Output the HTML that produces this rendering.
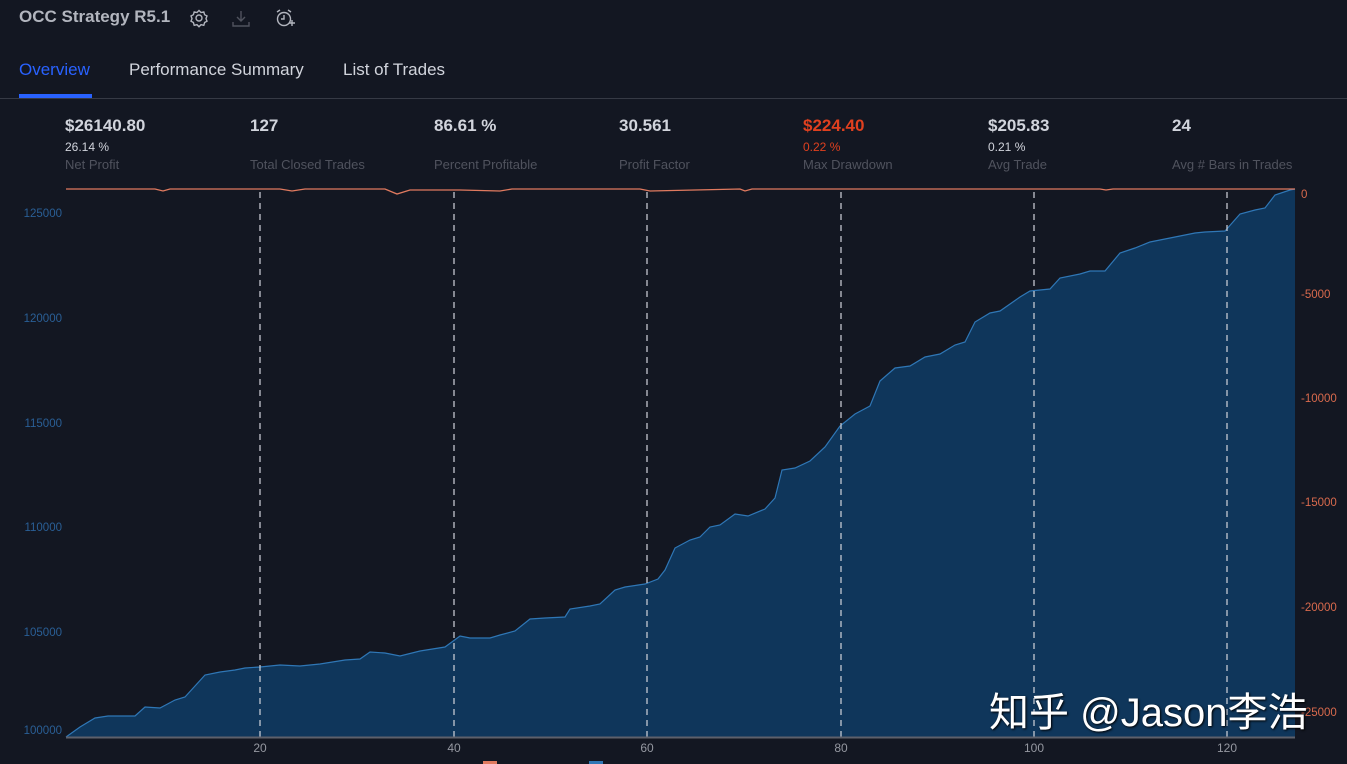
<!DOCTYPE html>
<html><head><meta charset="utf-8"><style>
body{margin:0;width:1347px;height:764px;background:#131722;overflow:hidden;font-family:"Liberation Sans","Noto Sans CJK SC",sans-serif;position:relative;color:#d1d4dc}
.t{position:absolute;white-space:nowrap}
.v{font-size:17px;font-weight:bold;color:#d1d4dc}
.s{font-size:12px;color:#d1d4dc}
.l{font-size:13px;color:#50535e}
</style></head><body>
<div class="t" style="left:19px;top:7px;font-size:17px;font-weight:bold;color:#b2b5be">OCC Strategy R5.1</div>
<svg class="t" style="left:189px;top:8px" width="110" height="20" viewBox="0 0 110 20" fill="none" stroke="#b2b5be" stroke-width="1.4">
<circle cx="10" cy="10" r="3"/><path d="M10 2.5l2 2 2.8-.6.8 2.8 2.4 1.3-1 2.6 1 2.6-2.4 1.3-.8 2.8-2.8-.6-2 2-2-2-2.8.6-.8-2.8-2.4-1.3 1-2.6-1-2.6 2.4-1.3.8-2.8 2.8.6z"/>
<path d="M52 3v10M48 9l4 4 4-4M44 14v4h16v-4" stroke="#50535e"/>
<circle cx="95" cy="11" r="6.5"/><path d="M95 7v4h-3M88 4l3-2M102 4l-3-2M100 15h6M103 12v6"/>
</svg>
<div class="t" style="left:19px;top:60px;font-size:17px;color:#2962ff">Overview</div>
<div style="position:absolute;left:19px;top:94px;width:73px;height:4px;background:#2962ff"></div>
<div class="t" style="left:129px;top:60px;font-size:17px;color:#d1d4dc">Performance Summary</div>
<div class="t" style="left:343px;top:60px;font-size:17px;color:#d1d4dc">List of Trades</div>
<div style="position:absolute;left:0;top:98px;width:1347px;height:1px;background:#363a45"></div>

<div class="t v" style="left:65px;top:116px">$26140.80</div><div class="t s" style="left:65px;top:140px">26.14 %</div><div class="t l" style="left:65px;top:157px">Net Profit</div>
<div class="t v" style="left:250px;top:116px">127</div><div class="t l" style="left:250px;top:157px">Total Closed Trades</div>
<div class="t v" style="left:434px;top:116px">86.61 %</div><div class="t l" style="left:434px;top:157px">Percent Profitable</div>
<div class="t v" style="left:619px;top:116px">30.561</div><div class="t l" style="left:619px;top:157px">Profit Factor</div>
<div class="t v" style="left:803px;top:116px;color:#e0401f">$224.40</div><div class="t s" style="left:803px;top:140px;color:#e0401f">0.22 %</div><div class="t l" style="left:803px;top:157px">Max Drawdown</div>
<div class="t v" style="left:988px;top:116px">$205.83</div><div class="t s" style="left:988px;top:140px">0.21 %</div><div class="t l" style="left:988px;top:157px">Avg Trade</div>
<div class="t v" style="left:1172px;top:116px">24</div><div class="t l" style="left:1172px;top:157px">Avg # Bars in Trades</div>

<svg class="t" style="left:0;top:0" width="1347" height="764" font-family="Liberation Sans, sans-serif" font-size="11.5">
<polygon fill="#0f365b" stroke="none" points="66,737 80,727 95,718 108,716 135,716 145,707 160,708 175,700 185,697 205,675 220,672 235,670 245,668 260,667 280,665 300,666 320,664 345,660 360,659 370,652 385,653 400,656 420,651 445,647 460,636 470,638 490,638 500,635 515,631 530,619 545,618 565,617 570,609 590,606 600,604 615,590 625,587 645,584 658,579 665,570 675,548 690,540 700,537 710,527 720,525 735,514 748,516 765,509 775,498 782,470 795,468 810,461 825,447 840,426 855,414 870,406 880,381 895,368 910,366 925,357 940,354 955,345 965,342 975,322 990,313 1000,311 1020,297 1030,291 1050,289 1060,278 1080,274 1090,271 1105,271 1120,253 1135,248 1150,242 1160,240 1180,236 1195,233 1205,232 1225,231 1240,214 1255,210 1265,208 1275,195 1290,190 1295,189 1295,737"/>
<polyline fill="none" stroke="#2f77b6" stroke-width="1.2" points="66,737 80,727 95,718 108,716 135,716 145,707 160,708 175,700 185,697 205,675 220,672 235,670 245,668 260,667 280,665 300,666 320,664 345,660 360,659 370,652 385,653 400,656 420,651 445,647 460,636 470,638 490,638 500,635 515,631 530,619 545,618 565,617 570,609 590,606 600,604 615,590 625,587 645,584 658,579 665,570 675,548 690,540 700,537 710,527 720,525 735,514 748,516 765,509 775,498 782,470 795,468 810,461 825,447 840,426 855,414 870,406 880,381 895,368 910,366 925,357 940,354 955,345 965,342 975,322 990,313 1000,311 1020,297 1030,291 1050,289 1060,278 1080,274 1090,271 1105,271 1120,253 1135,248 1150,242 1160,240 1180,236 1195,233 1205,232 1225,231 1240,214 1255,210 1265,208 1275,195 1290,190 1295,189"/>
<polyline fill="none" stroke="#e07a5f" stroke-width="1.3" points="66,189 155,189 163,191 170,189 280,189 292,191 305,189 385,189 397,194 410,190 460,190 500,191 512,189 600,189 640,189 650,191 740,189 745,191 752,189 980,189 1100,189 1106,190 1113,189 1295,189"/>
<g stroke="#d1d4dc" stroke-width="1.2" stroke-dasharray="6,5">
<line x1="260" y1="192" x2="260" y2="737"/><line x1="454" y1="192" x2="454" y2="737"/><line x1="647" y1="192" x2="647" y2="737"/><line x1="841" y1="192" x2="841" y2="737"/><line x1="1034" y1="192" x2="1034" y2="737"/><line x1="1227" y1="192" x2="1227" y2="737"/>
</g>
<line x1="66" y1="737.5" x2="1295" y2="737.5" stroke="#5d606b" stroke-width="2"/>
<g fill="#2a5f96" text-anchor="end"><text x="62" y="217">125000</text><text x="62" y="322">120000</text><text x="62" y="427">115000</text><text x="62" y="531">110000</text><text x="62" y="636">105000</text><text x="62" y="734">100000</text></g>
<g fill="#d96a4d"><text x="1301" y="198">0</text><text x="1301" y="298">-5000</text><text x="1301" y="402">-10000</text><text x="1301" y="506">-15000</text><text x="1301" y="611">-20000</text><text x="1301" y="716">-25000</text></g>
<g fill="#9598a1" text-anchor="middle" font-size="12"><text x="260" y="752">20</text><text x="454" y="752">40</text><text x="647" y="752">60</text><text x="841" y="752">80</text><text x="1034" y="752">100</text><text x="1227" y="752">120</text></g>
<rect x="483" y="761" width="14" height="6" fill="#e07a5f"/><rect x="589" y="761" width="14" height="6" fill="#2f77b6"/>
</svg>
<div class="t" style="left:989px;top:680px;font-size:40px;color:#fff;font-family:'Liberation Sans','Noto Sans CJK SC',sans-serif;text-shadow:1px 1px 2px #000">知乎 @Jason李浩</div>
</body></html>
